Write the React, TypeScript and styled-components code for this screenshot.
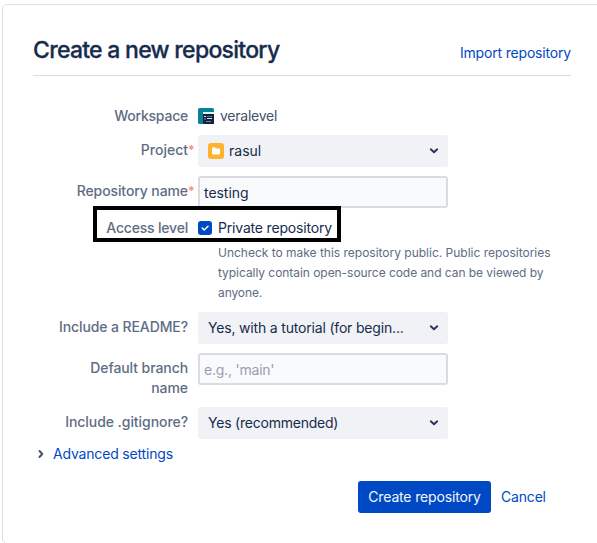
import React from "react";
import styled, { createGlobalStyle } from "styled-components";

const GlobalStyle = createGlobalStyle`
  * { box-sizing: border-box; }
  html { overflow: hidden; }
  body {
    margin: 0;
    overflow: hidden;
    background: #fff;
    color: #172b4d;
    font-family: Inter, "Liberation Sans", sans-serif;
    font-size: 14px;
    line-height: 20px;
  }
`;

const Viewport = styled.div`
  height: 543px;
  padding: 4px 0 0 2px;
  overflow: hidden;
`;

const Card = styled.main`
  width: 600px;
  height: 540px;
  padding: 0 0 0 30px;
  border: 1px solid #dcdfe4;
  border-radius: 5px;
  background: #fff;
`;

const Header = styled.header`
  display: flex;
  justify-content: space-between;
  width: 538px;
  height: 71px;
  border-bottom: 1px solid #d9dbe0;
`;

const Title = styled.h1`
  margin: 30px 0 0;
  font-size: 23px;
  line-height: 30px;
  font-weight: 500;
  letter-spacing: -0.72px;
  -webkit-text-stroke: 0.3px #172b4d;
  white-space: nowrap;
`;

const Link = styled.a`
  color: #0049c4;
  letter-spacing: -0.18px;
  text-decoration: none;
  white-space: nowrap;
`;

const ImportLink = styled(Link)`
  margin-top: 38px;
`;

const Form = styled.form`
  width: 538px;
  padding-top: 25px;
`;

const Row = styled.div<{ $height: number }>`
  position: relative;
  display: grid;
  grid-template-columns: 155px 1fr;
  column-gap: 10px;
  align-items: start;
  height: ${(p) => p.$height}px;
`;

const Label = styled.label<{ $spacing?: number }>`
  position: relative;
  justify-self: end;
  max-width: 135px;
  padding-top: 5px;
  color: #5e6c84;
  font-weight: 500;
  letter-spacing: ${(p) => p.$spacing ?? -0.1}px;
  text-align: right;
`;

const Required = styled.span`
  position: absolute;
  top: 5px;
  left: 100%;
  color: #ff8b80;
  font-size: 12px;
  font-weight: 700;
  letter-spacing: 0;
`;

const Select = styled.div`
  display: flex;
  align-items: center;
  width: 250px;
  height: 32px;
  padding: 0 9px 0 10px;
  border-radius: 3px;
  background: #f1f2f6;
`;

const Value = styled.span<{ $spacing?: number }>`
  flex: 1;
  letter-spacing: ${(p) => p.$spacing ?? -0.18}px;
  white-space: nowrap;
`;

const Input = styled.input`
  width: 250px;
  height: 32px;
  padding: 0 4px;
  border: 2px solid #d9dde2;
  border-radius: 3px;
  outline: none;
  background: #f9fafc;
  color: #172b4d;
  font: inherit;
  letter-spacing: -0.05px;
  &::placeholder { color: #97a0b0; opacity: 1; letter-spacing: -0.22px; }
`;

const Workspace = styled.div`
  display: flex;
  align-items: center;
  gap: 6px;
  padding-top: 5px;
  color: #42526e;
`;

const FolderIcon = styled.svg`
  margin-right: 5px;
`;

const Access = styled.div`
  display: grid;
  grid-template-columns: 14px 1fr;
  column-gap: 6px;
  align-items: center;
  padding-top: 5px;
`;

const Help = styled.p`
  grid-column: 2;
  margin: 5px 0 0;
  color: #5e6c84;
  font-size: 12px;
  white-space: nowrap;
`;

const HelpLine = styled.span<{ $spacing: number }>`
  display: block;
  letter-spacing: ${(p) => p.$spacing}px;
`;

const Highlight = styled.div`
  position: absolute;
  top: -7px;
  left: 60px;
  width: 248px;
  height: 36px;
  border: 4px solid #000;
`;

const Advanced = styled.div`
  display: flex;
  align-items: center;
  gap: 8px;
  height: 20px;
  padding-left: 4px;
`;

const Actions = styled.footer`
  display: flex;
  align-items: center;
  gap: 10px;
  margin: 17px 0 0 325px;
`;

const Submit = styled.button`
  width: 133px;
  height: 32px;
  padding: 0;
  border: 0;
  border-radius: 3px;
  background: #0049c4;
  color: #f4f7fc;
  font: inherit;
  letter-spacing: -0.16px;
  white-space: nowrap;
`;

const Chevron = () => (
  <svg width="10" height="8" viewBox="0 0 10 8" fill="none">
    <path d="M1.8 2.3 5 5.2 8.2 2.3" stroke="#253858" strokeWidth="2" strokeLinecap="round" strokeLinejoin="round" />
  </svg>
);

export default function App() {
  return (
    <Viewport>
      <GlobalStyle />
      <Card>
        <Header>
          <Title>Create a new repository</Title>
          <ImportLink>Import repository</ImportLink>
        </Header>
        <Form>
          <Row $height={34}>
            <Label $spacing={-0.22}>Workspace</Label>
            <Workspace>
              <svg width="16" height="16" viewBox="0 0 16 16">
                <rect width="16" height="16" rx="1.5" fill="#078297" />
                <path d="M5 4.5h11V16H6.5A1.5 1.5 0 0 1 5 14.5z" fill="#14213f" />
                <path d="M5 4h11v2H5z" fill="#e3f1f3" />
                <path d="M6 8.5h2M9 10.5h5" stroke="#d9e2ee" />
                <path d="M9 8.5h5" stroke="#238c9d" />
                <path d="M6 11h2" stroke="#ed5568" />
                <path d="M8 13.5h5" stroke="#71849d" />
              </svg>
              <Value $spacing={-0.25}>veralevel</Value>
            </Workspace>
          </Row>
          <Row $height={41}>
            <Label $spacing={0}>Project<Required>*</Required></Label>
            <Select>
              <FolderIcon width="16" height="16" viewBox="0 0 16 16">
                <rect width="16" height="16" rx="3" fill="#ffb22d" />
                <path d="M4 5.2q0-.9.9-.9h2l.9 1.2H11q1 0 1 1v4q0 1-1 1H5q-1 0-1-1z" fill="#fff" />
              </FolderIcon>
              <Value $spacing={0}>rasul</Value>
              <Chevron />
            </Select>
          </Row>
          <Row $height={37}>
            <Label>Repository name<Required>*</Required></Label>
            <Input defaultValue="testing" />
          </Row>
          <Row $height={99}>
            <Label $spacing={-0.2}>Access level</Label>
            <Access>
              <svg width="14" height="14" viewBox="0 0 14 14" fill="none">
                <rect width="14" height="14" rx="3" fill="#0049c4" />
                <path d="m4.2 7 2 2 3.8-3.8" stroke="#fff" strokeWidth="1.5" strokeLinecap="round" strokeLinejoin="round" />
              </svg>
              <Value>Private repository</Value>
              <Help>
                <HelpLine $spacing={-0.01}>Uncheck to make this repository public. Public repositories</HelpLine>
                <HelpLine $spacing={-0.05}>typically contain open-source code and can be viewed by</HelpLine>
                <HelpLine $spacing={-0.1}>anyone.</HelpLine>
              </Help>
            </Access>
            <Highlight />
          </Row>
          <Row $height={41}>
            <Label>Include a README?</Label>
            <Select><Value>Yes, with a tutorial (for begin...</Value><Chevron /></Select>
          </Row>
          <Row $height={54}>
            <Label $spacing={-0.08}>Default branch name</Label>
            <Input placeholder="e.g., 'main'" />
          </Row>
          <Row $height={37}>
            <Label $spacing={-0.06}>Include .gitignore?</Label>
            <Select><Value $spacing={-0.22}>Yes (recommended)</Value><Chevron /></Select>
          </Row>
          <Advanced>
            <svg width="8" height="10" viewBox="0 0 8 10" fill="none">
              <path d="M2.5 2 5.3 5 2.5 8" stroke="#42526e" strokeWidth="1.9" strokeLinecap="round" strokeLinejoin="round" />
            </svg>
            <Link>Advanced settings</Link>
          </Advanced>
          <Actions>
            <Submit type="button">Create repository</Submit>
            <Link>Cancel</Link>
          </Actions>
        </Form>
      </Card>
    </Viewport>
  );
}
